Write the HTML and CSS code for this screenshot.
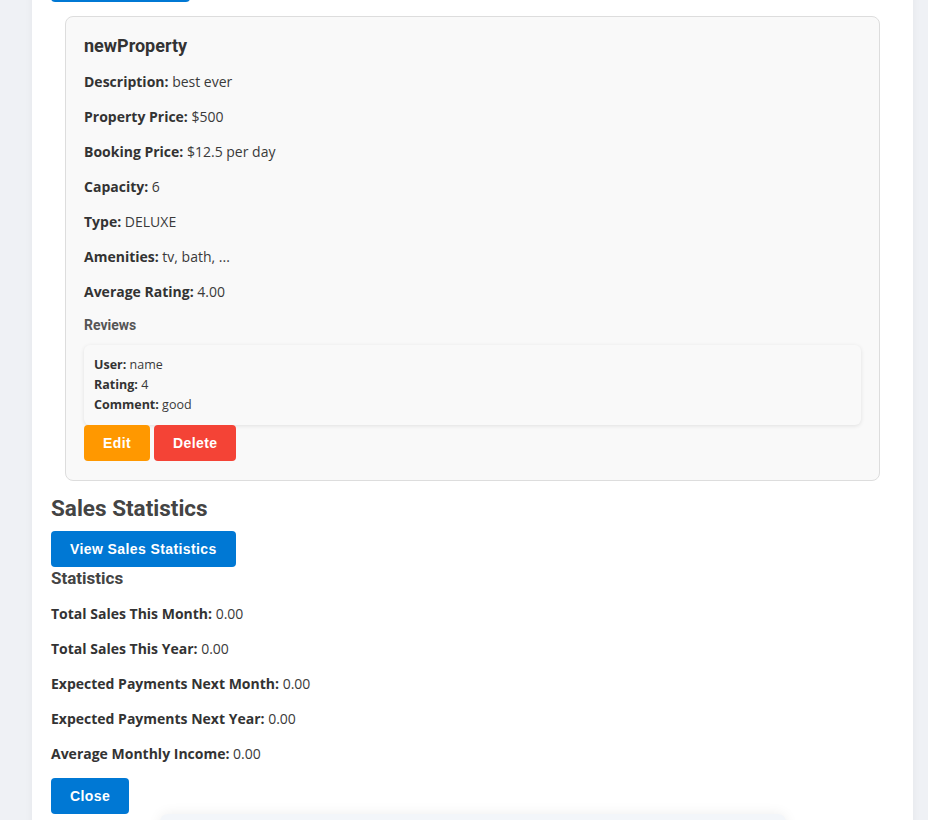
FILE: index.html
```html
<!DOCTYPE html>
<html lang="en">
<head>
<meta charset="UTF-8">
<title>Property Dashboard</title>
<link rel="stylesheet" href="styles.css">
</head>
<body>
<main class="panel">
  <button class="btn btn-blue btn-top">Add Property</button>
  <section class="property-card">
    <h3 class="prop-title">newProperty</h3>
    <p><strong>Description:</strong> best ever</p>
    <p><strong>Property Price:</strong> $500</p>
    <p><strong>Booking Price:</strong> $12.5 per day</p>
    <p><strong>Capacity:</strong> 6</p>
    <p><strong>Type:</strong> DELUXE</p>
    <p><strong>Amenities:</strong> tv, bath, ...</p>
    <p><strong>Average Rating:</strong> 4.00</p>
    <h4 class="reviews-title">Reviews</h4>
    <div class="review">
      <p><strong>User:</strong> name</p>
      <p><strong>Rating:</strong> 4</p>
      <p><strong>Comment:</strong> good</p>
    </div>
    <div class="actions">
      <button class="btn btn-orange">Edit</button>
      <button class="btn btn-red">Delete</button>
    </div>
  </section>
  <h2 class="section-title">Sales Statistics</h2>
  <button class="btn btn-blue">View Sales Statistics</button>
  <h3 class="stats-title">Statistics</h3>
  <p><strong>Total Sales This Month:</strong> 0.00</p>
  <p><strong>Total Sales This Year:</strong> 0.00</p>
  <p><strong>Expected Payments Next Month:</strong> 0.00</p>
  <p><strong>Expected Payments Next Year:</strong> 0.00</p>
  <p><strong>Average Monthly Income:</strong> 0.00</p>
  <button class="btn btn-blue">Close</button>
  <div class="next-card"></div>
</main>
</body>
</html>
```
FILE: styles.css
```css
html, body {
  margin: 0;
  padding: 0;
}
body {
  background: #eff1f5;
  font-family: "Open Sans", "Noto Sans", sans-serif;
  color: #333;
  overflow: hidden;
  height: 820px;
}
.panel {
  width: 881px;
  box-sizing: border-box;
  margin: -38px 0 0 32px;
  padding: 4px 19px 0 19px;
  background: #fff;
  box-shadow: 0 0 8px rgba(0,0,0,0.05);
  min-height: 900px;
}
p {
  font-size: 14px;
  line-height: 21px;
  margin: 14px 0;
  color: #3a3a3a;
}
strong {
  font-weight: 700;
  color: #333;
}
.btn {
  display: inline-block;
  border: none;
  border-radius: 4px;
  padding: 10px 19px;
  height: 36px;
  font-family: "Liberation Sans", Arial, sans-serif;
  font-weight: 700;
  font-size: 14px;
  line-height: 16px;
  letter-spacing: 0.4px;
  color: #fff;
  cursor: pointer;
}
.btn-top { padding: 10px 23px; }
.btn-blue { background: #0078d4; }
.btn-orange { background: #ff9800; }
.btn-red { background: #f44336; }
.property-card {
  margin: 14px 14px 0 14px;
  padding: 18px 18px 19px 18px;
  border: 1px solid #ddd;
  border-radius: 8px;
  background: #f9f9f9;
}
.prop-title {
  font-family: Roboto, "Liberation Sans", sans-serif;
  font-size: 18px;
  line-height: 22px;
  margin: 0 0 14px 0;
  color: #333;
}
.property-card > p:first-of-type { margin-top: 13px; }
.reviews-title {
  font-family: Roboto, "Liberation Sans", sans-serif;
  font-size: 14px;
  line-height: 17px;
  margin: 15px 0 11px 0;
  color: #555;
}
.review {
  background: #f9f9f9;
  border-radius: 6px;
  padding: 10px;
  box-shadow: 0 1px 4px rgba(0,0,0,0.1);
}
.review p {
  font-size: 12.5px;
  line-height: 20px;
  margin: 0;
}
.actions {
  display: flex;
  gap: 4px;
}
.section-title {
  font-family: Roboto, "Liberation Sans", sans-serif;
  font-size: 22.5px;
  line-height: 28px;
  margin: 13px 0 9px 0;
  color: #444;
}
.stats-title {
  font-family: Roboto, "Liberation Sans", sans-serif;
  font-size: 17px;
  line-height: 22px;
  margin: 0 0 14px 0;
  color: #444;
}
.next-card {
  width: 626px;
  height: 80px;
  margin: 0 0 0 109px;
  background: #f3f6fa;
  border-radius: 8px;
  box-shadow: 0 0 14px rgba(0,0,0,0.07);
}
```
